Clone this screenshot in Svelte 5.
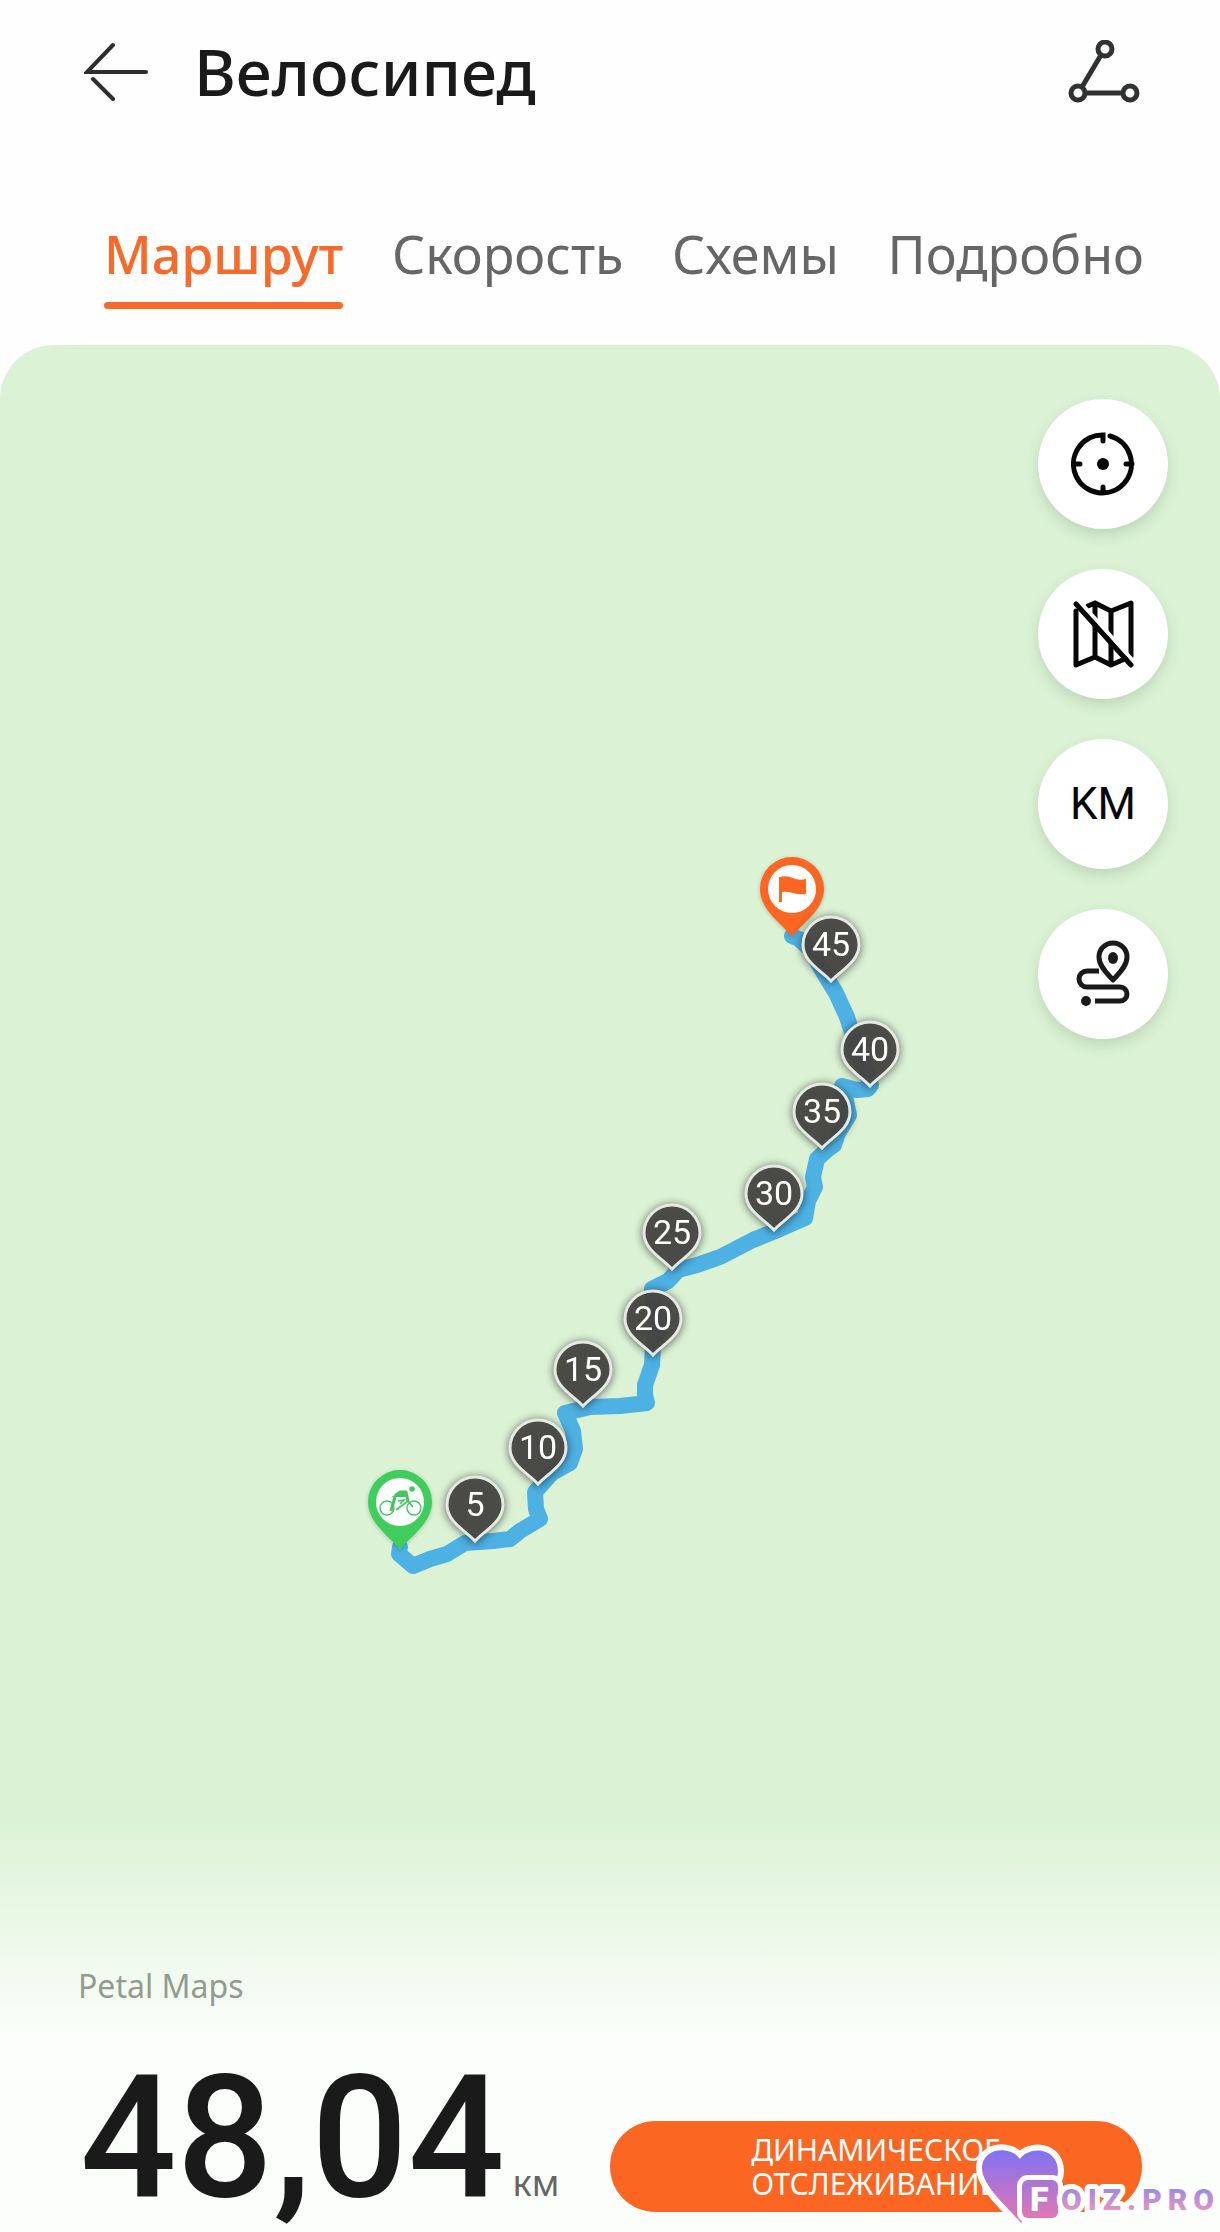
<script>
  const tabs = ['Маршрут', 'Скорость', 'Схемы', 'Подробно'];
  let active = $state('Маршрут');

  const markers = [
    { km: 5, x: 475, y: 1198 },
    { km: 10, x: 538, y: 1141 },
    { km: 15, x: 583, y: 1063 },
    { km: 20, x: 653, y: 1012 },
    { km: 25, x: 672, y: 926 },
    { km: 30, x: 774, y: 887 },
    { km: 35, x: 822, y: 805 },
    { km: 40, x: 870, y: 743 },
    { km: 45, x: 831, y: 638 }
  ];

  const track = [
    [792, 591], [799, 594], [810, 604], [822, 625], [836, 648], [847, 672], [860, 712], [871, 740],
    [868, 744], [857, 745], [842, 741], [846, 756], [849, 770], [838, 788], [834, 800], [827, 805],
    [817, 814], [813, 832], [815, 842], [808, 856], [805, 873], [780, 884], [753, 895], [720, 912],
    [697, 920], [678, 925], [668, 936], [652, 944], [653, 962], [660, 980], [653, 1000], [652, 1020],
    [645, 1040], [645, 1050], [647, 1058], [620, 1061], [590, 1062], [565, 1068], [573, 1086],
    [575, 1104], [570, 1118], [552, 1128], [535, 1147], [536, 1164], [540, 1174], [520, 1186],
    [510, 1194], [493, 1196], [465, 1198], [447, 1209], [430, 1214], [413, 1221], [399, 1209], [400, 1202]
  ].map((p) => p.join(',')).join(' ');
</script>

<main>
  <header>
    <button class="icon-btn" aria-label="Назад">
      <svg width="64" height="60" viewBox="0 0 64 60" fill="none" stroke="#2d2d2d" stroke-width="4" stroke-linecap="round">
        <path d="M29 3 3 30H62M29 57 9 37" />
      </svg>
    </button>
    <h1>Велосипед</h1>
    <button class="icon-btn" aria-label="Поделиться">
      <svg width="72" height="64" viewBox="0 0 72 64" fill="none" stroke="#303232" stroke-width="5">
        <circle cx="37" cy="9" r="7" />
        <circle cx="10" cy="53" r="7" />
        <circle cx="62" cy="53" r="7" />
        <path d="M33 15 14 47M17 53H55" />
      </svg>
    </button>
  </header>

  <nav>
    {#each tabs as tab}
      <button class="tab" class:active={active === tab} onclick={() => (active = tab)}>{tab}</button>
    {/each}
  </nav>

  <section class="map">
    <svg class="canvas" viewBox="0 0 1220 1887">
      <polyline points={track} fill="none" stroke="#4db1e3" stroke-width="16" stroke-linejoin="round" stroke-linecap="round" />

      <g class="end" transform="translate(792 592)">
        <path d="M0 0C-8 -12 -32 -26 -32 -48A32 32 0 1 1 32 -48C32 -26 8 -12 0 0Z" fill="#fb6622" />
        <circle cx="0" cy="-48" r="24" fill="#fff" />
        <path d="M-13 -60Q-5 -62 1 -59T14 -58V-43Q7 -42 1 -44T-10 -45V-35H-13Z" fill="#fb6622" />
      </g>

      <g class="end" transform="translate(400 1205)">
        <path d="M0 0C-8 -12 -32 -26 -32 -48A32 32 0 1 1 32 -48C32 -26 8 -12 0 0Z" fill="#3fce5d" />
        <circle cx="0" cy="-48" r="24" fill="#fff" />
        <g fill="none" stroke="#45c463">
          <circle cx="-13" cy="-42" r="7" stroke-width="1.4" />
          <circle cx="14" cy="-42" r="7" stroke-width="1.4" />
          <path d="M-9 -39 -5 -53" stroke-width="3" />
          <path d="M-5 -54 0 -58H6L8 -49" stroke-width="3" stroke-linejoin="round" />
          <path d="M-5 -54 0 -57H6L5 -54H0Z" fill="#45c463" stroke-width="2" />
          <path d="M-2 -49 4 -50 0 -46M8 -49-4 -40M8 -49 13 -43" stroke-width="1.6" />
        </g>
        <circle cx="12" cy="-61" r="2.8" fill="#3fce5d" />
      </g>

      {#each markers as m}
        <g class="marker" transform={`translate(${m.x} ${m.y})`}>
          <path d="M0 -2C-9 -12 -28 -21 -28 -38A28 28 0 1 1 28 -38C28 -21 9 -12 0 -2Z" />
          <text x="0" y="-27">{m.km}</text>
        </g>
      {/each}
    </svg>

    <div class="tools">
      <button class="tool" aria-label="Моё местоположение">
        <svg width="64" height="64" viewBox="0 0 64 64" fill="none" stroke="#060606" stroke-width="5" stroke-linecap="round">
          <path d="M32 9V3A29 29 0 1 0 39 4M3 32H9M55 32H61M32 55V61" />
          <circle cx="32" cy="32" r="6" fill="#060606" stroke="none" />
        </svg>
      </button>
      <button class="tool" aria-label="Скрыть карту">
        <svg width="64" height="68" viewBox="0 0 64 68" fill="none" stroke="#060606" stroke-width="5" stroke-linecap="round" stroke-linejoin="round">
          <path d="M5 11V65L24 57 40 65 56 58M17 6 24 3 40 11 60 3V56M24 3V57M40 11V65" />
          <path d="M9 2 64 63" stroke="#fff" stroke-width="4" />
          <path d="M5 4 60 65" />
        </svg>
      </button>
      <button class="tool unit">KM</button>
      <button class="tool" aria-label="Маршрут на карте">
        <svg width="64" height="68" viewBox="0 0 64 68" fill="none" stroke="#1a1a1a" stroke-width="5">
          <path d="M42 40C38 35 28 27 28 17A14 14 0 1 1 56 17C56 27 46 35 42 40Z" stroke-linejoin="round" />
          <ellipse cx="42" cy="18" rx="5" ry="6" fill="#1a1a1a" stroke="none" />
          <path d="M28 31H16A7 7 0 0 0 16 47H49A7 7 0 0 1 49 61H24" />
          <circle cx="15" cy="61" r="5" fill="#1a1a1a" stroke="none" />
        </svg>
      </button>
    </div>

    <footer>
      <p class="provider">Petal Maps</p>
      <div class="summary">
        <p class="distance"><strong>48,04</strong> <span>км</span></p>
        <button class="track-btn"><span>ДИНАМИЧЕСКОЕ<br />ОТСЛЕЖИВАНИЕ</span></button>
      </div>
    </footer>
  </section>

  <a class="badge" href="#foiz" aria-label="Foiz.pro">
    <svg width="244" height="88" viewBox="0 0 244 88">
      <defs>
        <linearGradient id="heart" x1="0" y1="0" x2="0" y2="1">
          <stop offset="0" stop-color="#7f73f2" />
          <stop offset="1" stop-color="#e974b0" />
        </linearGradient>
        <linearGradient id="tile" x1="0" y1="0" x2="0" y2="1">
          <stop offset="0" stop-color="#a676d6" />
          <stop offset="1" stop-color="#e077b6" />
        </linearGradient>
        <linearGradient id="word" gradientUnits="userSpaceOnUse" x1="0" y1="42" x2="0" y2="68">
          <stop offset="0" stop-color="#8f8af0" />
          <stop offset="1" stop-color="#ee93b8" />
        </linearGradient>
      </defs>
      <path d="M45 79C36 67 6 43 6 24C6 4 34 1 44 15C54 1 82 4 82 27C82 45 60 62 45 79Z" fill="url(#heart)" stroke="#fff" stroke-width="12" stroke-linejoin="round" paint-order="stroke" />
      <rect x="46" y="36" width="36" height="38" rx="6" fill="url(#tile)" stroke="#fff" stroke-width="10" paint-order="stroke" />
      <text x="54" y="67" fill="#fff" class="initial">F</text>
      <text x="85" y="66" fill="url(#word)" stroke="#fff" stroke-width="10" stroke-linejoin="round" paint-order="stroke" class="word">OIZ.PRO</text>
    </svg>
  </a>
</main>

<style>
  :global(body) { margin: 0; background: #fefefe; }
  main {
    position: relative;
    overflow: hidden;
    font-family: "Noto Sans", sans-serif;
    color: #1a1a1a;
  }
  button {
    border: 0;
    padding: 0;
    background: none;
    font: inherit;
    color: inherit;
    cursor: pointer;
  }
  svg { display: block; }
  h1, p { margin: 0; }

  header {
    display: flex;
    align-items: center;
    padding: 32px 80px 36px 84px;
  }
  h1 {
    flex: 1;
    margin-left: 46px;
    font-size: 64px;
    line-height: 80px;
    font-weight: 500;
  }

  nav {
    display: flex;
    justify-content: space-between;
    padding: 70px 76px 36px 104px;
  }
  .tab {
    position: relative;
    padding-bottom: 19px;
    font-size: 52px;
    line-height: 72px;
    color: #666;
  }
  .active {
    color: #f66a2a;
    font-weight: 500;
  }
  .active::after {
    content: "";
    position: absolute;
    left: 0;
    right: 0;
    bottom: 0;
    height: 7px;
    border-radius: 4px;
    background: #f66a2a;
  }

  .map {
    display: grid;
    border-radius: 54px 54px 0 0;
    background: linear-gradient(#dbf2d5 78%, #fcfefb 90%);
  }
  .map > * { grid-area: 1 / 1; }
  .canvas { width: 100%; }
  .end { filter: drop-shadow(0 1px 2px rgb(0 0 0 / 0.2)); }
  .marker { filter: drop-shadow(0 1px 4px rgb(0 0 0 / 0.6)); }
  .marker path {
    fill: rgb(72 71 67 / 0.92);
    stroke: #e6e9e4;
    stroke-width: 3;
  }
  .marker text {
    fill: #fff;
    font-family: Roboto, sans-serif;
    font-size: 34px;
    text-anchor: middle;
  }

  .tools {
    justify-self: end;
    align-self: start;
    display: grid;
    gap: 40px;
    padding: 54px 52px 0 0;
  }
  .tool {
    display: grid;
    place-items: center;
    width: 130px;
    height: 130px;
    border-radius: 50%;
    background: #fff;
    box-shadow: 0 6px 14px rgb(60 90 50 / 0.18);
  }
  .unit {
    font-family: Roboto, sans-serif;
    font-size: 44px;
    color: #060606;
  }

  footer {
    align-self: end;
    padding: 0 78px 20px;
  }
  .provider {
    margin-bottom: 58px;
    font-size: 32px;
    line-height: 40px;
    color: #939b91;
  }
  .summary {
    display: flex;
    align-items: flex-end;
    justify-content: space-between;
  }
  .distance {
    display: flex;
    align-items: baseline;
    gap: 8px;
    padding-left: 2px;
  }
  strong {
    font-family: Roboto, sans-serif;
    font-size: 170px;
    line-height: 148px;
    font-weight: 500;
  }
  .distance span {
    font-size: 36px;
    line-height: 40px;
    color: #666;
  }
  .track-btn {
    display: grid;
    place-items: center;
    width: 50%;
    padding: 12px 0 11px;
    border-radius: 46px;
    background: #fb6622;
    color: #fff;
    font-size: 30px;
    line-height: 34px;
    text-align: left;
  }

  .badge {
    position: absolute;
    right: 0;
    bottom: 0;
  }
  .initial {
    font: 900 34px Roboto, sans-serif;
  }
  .word {
    font: 900 30px Roboto, sans-serif;
    letter-spacing: 6px;
  }
</style>
